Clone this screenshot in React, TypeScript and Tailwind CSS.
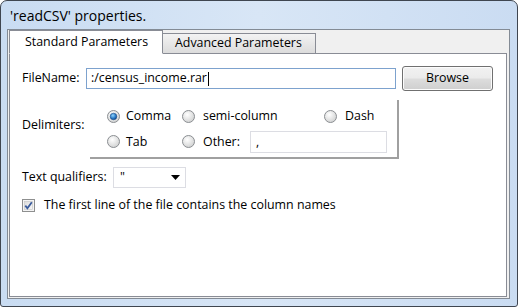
import React from 'react';

const font = { fontFamily: '"Open Sans", "Liberation Sans", sans-serif' };

function Radio({ checked }: { checked?: boolean }) {
    return (
        <svg width="13" height="13" viewBox="0 0 13 13" className="shrink-0">
            <defs>
                <radialGradient id="rbg" cx="0.4" cy="0.35" r="0.7">
                    <stop offset="0" stopColor="#ffffff" />
                    <stop offset="1" stopColor="#cfd0d0" />
                </radialGradient>
                <radialGradient id="rdot" cx="0.4" cy="0.35" r="0.7">
                    <stop offset="0" stopColor="#8fd3fb" />
                    <stop offset="0.6" stopColor="#2b7bc7" />
                    <stop offset="1" stopColor="#0b3e7d" />
                </radialGradient>
            </defs>
            <circle cx="6.5" cy="6.5" r="6" fill="url(#rbg)" stroke="#8b8e92" />
            {checked && <circle cx="6.5" cy="6.5" r="3.3" fill="url(#rdot)" stroke="#1f4f8c" strokeWidth="0.6" />}
        </svg>
    );
}

export default function App() {
    return (
        <div className="w-[518px] h-[307px] overflow-hidden bg-white" style={font}>
            <div className="w-[518px] h-[307px] flex flex-col border border-[#3f4650] rounded-t-[7px] rounded-b-[3px] bg-gradient-to-r from-[#c9dcf2] via-[#d8e6f6] to-[#cadcf2]">
                {/* title */}
                <div className="h-[28px] flex items-center pl-[9px] text-[14px] text-black">'readCSV' properties.</div>

                {/* client area */}
                <div className="ml-[6px] w-[503px] h-[270px] border border-[#838b95] bg-[#f0f0f0] flex flex-col">
                    {/* tabs */}
                    <div className="flex h-[23px] pl-px items-end text-[12.4px] text-black">
                        <div className="w-[154px] h-[24px] -mb-px relative z-10 bg-white border border-[#898c95] border-b-white flex items-center pl-[15px]">
                            Standard Parameters
                        </div>
                        <div className="w-[153px] h-[20px] border border-l-0 border-b-0 border-[#898c95] bg-gradient-to-b from-[#f3f3f3] to-[#dcdcdc] flex items-center pl-[12px]">
                            Advanced Parameters
                        </div>
                    </div>

                    {/* pane */}
                    <div className="ml-px w-[498px] h-[244px] border border-[#898c95] bg-white text-[12.4px] text-black">
                        {/* file name */}
                        <div className="flex items-center h-[25px] mt-[12px] pl-[12px]">
                            <span className="w-[64px]">FileName:</span>
                            <div className="w-[310px] h-[21px] border border-[#7da2ce] flex items-center pl-[4px]">
                                <span>:/census_income.rar</span>
                                <span className="w-px h-[14px] bg-black ml-px" />
                            </div>
                            <button className="ml-[6px] w-[91px] h-[25px] rounded-[3px] border border-[#707070] bg-[linear-gradient(#f2f2f2,#ebebeb_48%,#dddddd_52%,#cfcfcf)] shadow-[inset_0_0_0_1px_#fcfcfc] text-[12.4px]">
                                Browse
                            </button>
                        </div>

                        {/* delimiters */}
                        <div className="flex items-center mt-[9px] pl-[12px]">
                            <span className="w-[68px] -mt-[8px]">Delimiters:</span>
                            <div className="w-[309px] h-[59px] border-r-2 border-b-2 border-[#a0a0a0] flex flex-col pl-[17px]">
                                <div className="flex items-center h-[14px] mt-[9px]">
                                    <div className="w-[75px] flex items-center gap-[6px]">
                                        <Radio checked />
                                        <span>Comma</span>
                                    </div>
                                    <div className="w-[142px] flex items-center gap-[8px]">
                                        <Radio />
                                        <span>semi-column</span>
                                    </div>
                                    <div className="flex items-center gap-[8px]">
                                        <Radio />
                                        <span>Dash</span>
                                    </div>
                                </div>
                                <div className="flex items-center h-[22px] mt-[8px]">
                                    <div className="w-[75px] flex items-center gap-[6px]">
                                        <Radio />
                                        <span>Tab</span>
                                    </div>
                                    <div className="flex items-center gap-[8px]">
                                        <Radio />
                                        <span className="w-[47px]">Other:</span>
                                    </div>
                                    <div className="w-[137px] h-[22px] border border-[#dcdde3] flex items-center pl-[5px]">,</div>
                                </div>
                            </div>
                        </div>

                        {/* text qualifiers */}
                        <div className="flex items-center mt-[8px] pl-[12px]">
                            <span className="w-[91px]">Text qualifiers:</span>
                            <div className="w-[73px] h-[21px] border border-[#dcdde3] flex items-center justify-between pl-[6px] pr-[5px]">
                                <span>"</span>
                                <svg width="9" height="5" viewBox="0 0 9 5">
                                    <path d="M0 0 H9 L4.5 5 Z" fill="#000" />
                                </svg>
                            </div>
                        </div>

                        {/* checkbox */}
                        <div className="flex items-center mt-[8px] pl-[12px] gap-[9px]">
                            <svg width="13" height="13" viewBox="0 0 13 13" className="shrink-0">
                                <defs>
                                    <linearGradient id="cb" x1="0" y1="0" x2="1" y2="1">
                                        <stop offset="0" stopColor="#dcdcdc" />
                                        <stop offset="1" stopColor="#f8f8f8" />
                                    </linearGradient>
                                </defs>
                                <rect x="0.5" y="0.5" width="12" height="12" fill="#f4f4f4" stroke="#8e8f8f" />
                                <rect x="2.5" y="2.5" width="8" height="8" fill="url(#cb)" stroke="#c4c4c4" strokeWidth="0.6" />
                                <path d="M3.3 6.6 L5.4 9.2 L9.8 3.2" fill="none" stroke="#3a5b9c" strokeWidth="1.8" />
                            </svg>
                            <span>The first line of the file contains the column names</span>
                        </div>
                    </div>
                </div>
            </div>
        </div>
    );
}
